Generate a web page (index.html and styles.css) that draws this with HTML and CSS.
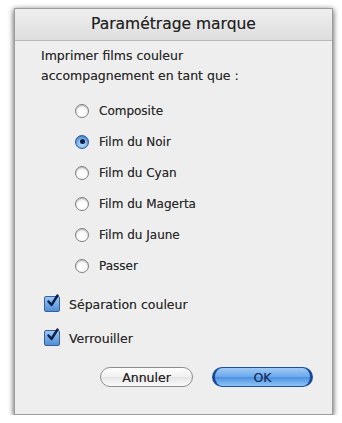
FILE: index.html
```html
<!DOCTYPE html>
<html lang="fr">
<head>
<meta charset="utf-8">
<title>Paramétrage marque</title>
<link rel="stylesheet" href="styles.css">
</head>
<body>
<div class="dialog">
  <div class="titlebar">Paramétrage marque</div>
  <div class="content">
    <p class="intro">Imprimer films couleur<br>accompagnement en tant que :</p>
    <ul class="radios">
      <li class="row"><span class="radio"></span>Composite</li>
      <li class="row"><span class="radio on"></span>Film du Noir</li>
      <li class="row"><span class="radio"></span>Film du Cyan</li>
      <li class="row"><span class="radio"></span>Film du Magerta</li>
      <li class="row"><span class="radio"></span>Film du Jaune</li>
      <li class="row"><span class="radio"></span>Passer</li>
    </ul>
    <ul class="checks">
      <li class="crow"><span class="check"><svg viewBox="0 0 15 15" width="15" height="15"><path d="M3.5 7.5 L6.5 11 L12.5 1.5" fill="none" stroke="#0d1f4a" stroke-width="2.4" stroke-linecap="round" stroke-linejoin="round"/></svg></span>Séparation couleur</li>
      <li class="crow"><span class="check"><svg viewBox="0 0 15 15" width="15" height="15"><path d="M3.5 7.5 L6.5 11 L12.5 1.5" fill="none" stroke="#0d1f4a" stroke-width="2.4" stroke-linecap="round" stroke-linejoin="round"/></svg></span>Verrouiller</li>
    </ul>
    <div class="buttons">
      <button class="btn cancel">Annuler</button>
      <button class="btn ok">OK</button>
    </div>
  </div>
</div>
</body>
</html>
```
FILE: styles.css
```css
html, body {
  margin: 0;
  padding: 0;
  background: #ffffff;
}
body {
  padding: 8px 0 0 14px;
  font-family: "DejaVu Sans", "Liberation Sans", sans-serif;
  color: #2a2a2a;
}
.dialog {
  width: 317px;
  height: 405px;
  border: 1px solid #9c9c9c;
  background: #eeeeee;
  box-shadow: 0 3px 5px rgba(0,0,0,0.45), -2px 0 5px rgba(0,0,0,0.18), 2px 0 5px rgba(0,0,0,0.18);
  display: flex;
  flex-direction: column;
  text-shadow: 0 0 0.6px rgba(0,0,0,0.45);
}
.titlebar {
  height: 31px;
  line-height: 31px;
  text-align: center;
  font-size: 15.5px;
  color: #222;
  background: linear-gradient(#eeeeee, #dedede);
  border-bottom: 1px solid #b9b9b9;
}
.content {
  flex: 1;
  padding: 5px 19px 0 26px;
  display: flex;
  flex-direction: column;
}
.intro {
  margin: 0;
  font-size: 12.5px;
  line-height: 20px;
}
.radios {
  list-style: none;
  margin: 9px 0 0 0;
  padding: 0 0 0 34px;
}
.row {
  height: 31px;
  display: flex;
  align-items: center;
  font-size: 12px;
  gap: 10px;
}
.radio {
  width: 12px;
  height: 12px;
  border-radius: 50%;
  border: 1.5px solid #7e7e7e;
  background: radial-gradient(circle at 50% 70%, #ffffff 40%, #d8d8d8 100%);
  box-shadow: inset 0 1px 1px rgba(0,0,0,0.2);
  position: relative;
}
.radio.on {
  border-color: #2e5a9e;
  background: radial-gradient(circle at 50% 65%, #a9d2fa 20%, #4a8fdc 80%);
}
.radio.on::after {
  content: "";
  position: absolute;
  left: 3.5px;
  top: 3.5px;
  width: 5px;
  height: 5px;
  border-radius: 50%;
  background: #0e1f40;
}
.checks {
  list-style: none;
  margin: 6px 0 0 0;
  padding: 0 0 0 3px;
}
.crow {
  height: 34px;
  display: flex;
  align-items: center;
  gap: 9px;
  font-size: 12.5px;
}
.check {
  width: 14px;
  height: 14px;
  border: 1px solid #3a5f96;
  border-radius: 2px;
  background: linear-gradient(#9cc8f3, #4f8fd8);
  position: relative;
}
.check svg {
  position: absolute;
  left: 0;
  top: -3px;
}
.buttons {
  display: flex;
  justify-content: flex-end;
  gap: 19px;
  margin-top: 12px;
}
.btn {
  height: 20px;
  border-radius: 10px;
  font-family: "DejaVu Sans", "Liberation Sans", sans-serif;
  font-size: 12.5px;
  padding: 0;
  color: #222;
  text-shadow: 0 0 0.6px rgba(0,0,0,0.45);
}
.cancel {
  width: 93px;
  border: 1px solid #8d8d8d;
  background: linear-gradient(#ffffff, #f0f0f0 50%, #e4e4e4 51%, #fafafa);
}
.ok {
  width: 101px;
  border: 1px solid #1c4f9e;
  border-left: 3px solid #1a4a95;
  border-right: 3px solid #1a4a95;
  background: linear-gradient(#9fcaf5, #6aa8ec 50%, #4b90e2 51%, #8fc5f6);
  color: #17305a;
}
```
